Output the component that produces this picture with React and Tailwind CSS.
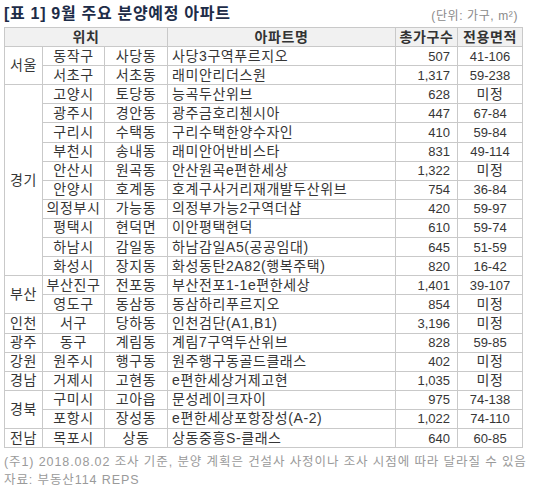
import React from "react";

const groups = [
  {
    region: "서울",
    rows: [
      ["동작구", "사당동", "사당3구역푸르지오", "507", "41-106"],
      ["서초구", "서초동", "래미안리더스원", "1,317", "59-238"],
    ],
  },
  {
    region: "경기",
    rows: [
      ["고양시", "토당동", "능곡두산위브", "628", "미정"],
      ["광주시", "경안동", "광주금호리첸시아", "447", "67-84"],
      ["구리시", "수택동", "구리수택한양수자인", "410", "59-84"],
      ["부천시", "송내동", "래미안어반비스타", "831", "49-114"],
      ["안산시", "원곡동", "안산원곡e편한세상", "1,322", "미정"],
      ["안양시", "호계동", "호계구사거리재개발두산위브", "754", "36-84"],
      ["의정부시", "가능동", "의정부가능2구역더샵", "420", "59-97"],
      ["평택시", "현덕면", "이안평택현덕", "610", "59-74"],
      ["하남시", "감일동", "하남감일A5(공공임대)", "645", "51-59"],
      ["화성시", "장지동", "화성동탄2A82(행복주택)", "820", "16-42"],
    ],
  },
  {
    region: "부산",
    rows: [
      ["부산진구", "전포동", "부산전포1-1e편한세상", "1,401", "39-107"],
      ["영도구", "동삼동", "동삼하리푸르지오", "854", "미정"],
    ],
  },
  { region: "인천", rows: [["서구", "당하동", "인천검단(A1,B1)", "3,196", "미정"]] },
  { region: "광주", rows: [["동구", "계림동", "계림7구역두산위브", "828", "59-85"]] },
  { region: "강원", rows: [["원주시", "행구동", "원주행구동골드클래스", "402", "미정"]] },
  { region: "경남", rows: [["거제시", "고현동", "e편한세상거제고현", "1,035", "미정"]] },
  {
    region: "경북",
    rows: [
      ["구미시", "고아읍", "문성레이크자이", "975", "74-138"],
      ["포항시", "장성동", "e편한세상포항장성(A-2)", "1,022", "74-110"],
    ],
  },
  { region: "전남", rows: [["목포시", "상동", "상동중흥S-클래스", "640", "60-85"]] },
];

const cell = "border border-[#c9c9c9] h-[19.1px] p-0 leading-[13px] whitespace-nowrap";
const kor = "text-[14px] tracking-[0.6px]";

export default function App() {
  return (
    <div
      className="w-[540px] h-[488px] bg-white text-[#363636] overflow-hidden"
      style={{ fontFamily: '"Liberation Sans", "Noto Sans CJK KR", sans-serif' }}
    >
      <div className="flex items-end justify-between pl-[4px] pr-[22px] h-[27px] pb-[5px]">
        <h1 className="text-[16px] font-bold text-[#1d2c48] leading-none tracking-[0.7px]">
          [표 1] 9월 주요 분양예정 아파트
        </h1>
        <span className="text-[12px] text-[#8a8a8a] leading-none tracking-[0.6px]">(단위: 가구, m²)</span>
      </div>

      <table className="ml-[4px] w-[518px] border-collapse table-fixed text-[13px]">
        <colgroup>
          <col className="w-[38px]" />
          <col className="w-[62px]" />
          <col className="w-[63px]" />
          <col className="w-[228px]" />
          <col className="w-[62px]" />
          <col className="w-[65px]" />
        </colgroup>
        <thead>
          <tr className="bg-[#f1f1f1] text-[#333]">
            <th colSpan={3} className={`${cell} ${kor} h-[18px] font-bold`}>위치</th>
            <th className={`${cell} ${kor} h-[18px] font-bold`}>아파트명</th>
            <th className={`${cell} ${kor} h-[18px] font-bold`}>총가구수</th>
            <th className={`${cell} ${kor} h-[18px] font-bold`}>전용면적</th>
          </tr>
        </thead>
        <tbody>
          {groups.map((g) =>
            g.rows.map((r, i) => (
              <tr key={g.region + r[0]}>
                {i === 0 && (
                  <td rowSpan={g.rows.length} className={`${cell} ${kor} text-center`}>
                    {g.region}
                  </td>
                )}
                <td className={`${cell} ${kor} text-center`}>{r[0]}</td>
                <td className={`${cell} ${kor} text-center`}>{r[1]}</td>
                <td className={`${cell} ${kor} text-left pl-[4px]`}>{r[2]}</td>
                <td className={`${cell} text-right pr-[7px]`}>{r[3]}</td>
                <td className={`${cell} ${/[가-힣]/.test(r[4]) ? kor : ""} text-center`}>{r[4]}</td>
              </tr>
            ))
          )}
        </tbody>
      </table>

      <div className="pl-[4px] pt-[5px] text-[12.5px] text-[#9a9a9a] leading-[18px] tracking-[0.9px] whitespace-nowrap">
        <p>(주1) 2018.08.02 조사 기준, 분양 계획은 건설사 사정이나 조사 시점에 따라 달라질 수 있음</p>
        <p>자료: 부동산114 REPS</p>
      </div>
    </div>
  );
}
